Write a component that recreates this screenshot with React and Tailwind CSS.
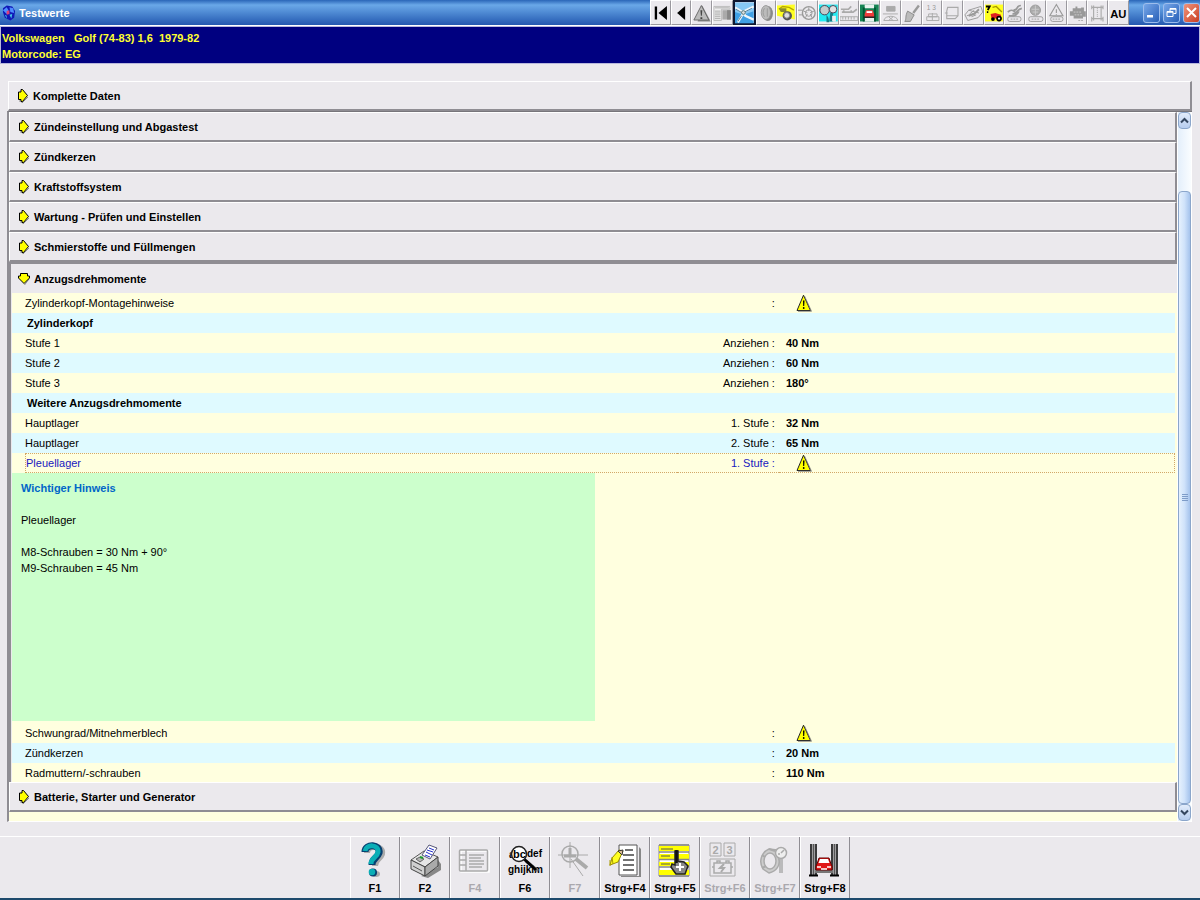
import { useState } from 'react';

const SECTIONS = [
  'Zündeinstellung und Abgastest',
  'Zündkerzen',
  'Kraftstoffsystem',
  'Wartung - Prüfen und Einstellen',
  'Schmierstoffe und Füllmengen',
];

const ROWS = [
  { label: 'Zylinderkopf-Montagehinweise', warn: true },
  { label: 'Zylinderkopf', heading: true },
  { label: 'Stufe 1', step: 'Anziehen', value: '40 Nm' },
  { label: 'Stufe 2', step: 'Anziehen', value: '60 Nm' },
  { label: 'Stufe 3', step: 'Anziehen', value: '180°' },
  { label: 'Weitere Anzugsdrehmomente', heading: true },
  { label: 'Hauptlager', step: '1. Stufe', value: '32 Nm' },
  { label: 'Hauptlager', step: '2. Stufe', value: '65 Nm' },
  { label: 'Pleuellager', step: '1. Stufe', warn: true },
  { hint: true },
  { label: 'Schwungrad/Mitnehmerblech', warn: true },
  { label: 'Zündkerzen', value: '20 Nm' },
  { label: 'Radmuttern/-schrauben', value: '110 Nm' },
];

function ArrowIcon({ open }) {
  return (
    <svg
      className="w-[12px] h-[14px] shrink-0"
      viewBox="0 0 12 14"
      fill="none"
      aria-hidden="true"
    >
      {open ? (
        <>
          <path d="M11 7l-4.500 6" stroke="#8a8a8a" />
          <path
            d="M2.500 1.500h7v2.500h2v2L6 11.500.5 6V4h2z"
            fill="#ffff00"
            stroke="#000"
          />
        </>
      ) : (
        <>
          <path d="M2 12h3v2l6-6" stroke="#8a8a8a" />
          <path
            d="M1.500 3H4V.5h1.500L10.500 6.500 5.500 12.500H4V10.500H1.500z"
            fill="#ffff00"
            stroke="#000"
          />
        </>
      )}
    </svg>
  );
}

function WarnIcon() {
  return (
    <svg
      className="block w-[16px] h-[18px]"
      viewBox="0 0 16 18"
      role="img"
      aria-label="Hinweis"
    >
      <path
        d="M7.500 1.200L14.500 16.500H1z"
        fill="#ffff00"
        stroke="#222"
      />
      <path d="M8.500 2l7 15.300H2" fill="none" stroke="#777" strokeWidth=".8" />
      <path d="M7 6.500h1.500L8.200 12H7.200z" />
      <circle cx="7.700" cy="14" r=".9" />
    </svg>
  );
}

const TOOLS = [
  {
    name: 'Erster',
    art: <path d="M4 4h2.500v14H4zM17 3.500v15L8 11z" />,
  },
  { name: 'Zurück', art: <path d="M14 3.500v15L5.500 11z" /> },
  {
    name: 'Hinweise',
    art: (
      <g>
        <path d="M11 3l9 17H6" fill="#888" />
        <path d="M10 3l8 15.500H2z" fill="#bbb" stroke="#666" />
        <path d="M9 8h2l-.5 6h-1zM9 15.500h2v1.800H9z" fill="#444" />
      </g>
    ),
  },
  {
    name: 'Fahrzeugdaten',
    art: (
      <g>
        <path d="M1 4h17v3H9v12H1z" fill="#eee" stroke="#bbb" />
        <path d="M2 5.500h15M2 9h6M2 11h6M2 13h6M2 15h6M2 17h6" stroke="#aaa" />
        <path d="M10 8h9v10h-9z" fill="#aaa" />
        <path d="M15 8h4v10h-4z" fill="#888" />
      </g>
    ),
  },
  {
    name: 'Testwerte',
    active: true,
    art: (
      <g>
        <path d="M0 0h20v22H0z" fill="#3f9fe4" />
        <path d="M0 0h20v9L9 13l-9-3z" fill="#86c8f4" />
        <path d="M0 5l8 5 12-6M9 11l-6 10M8 10l3 4 9 4" fill="none" stroke="#eef6fa" strokeWidth="2.500" />
        <path d="M1 7l7 4 10-5M7 14l-4 6" fill="none" stroke="#557c96" />
        <circle cx="9" cy="10.500" r="2" fill="#ddd" stroke="#577" />
      </g>
    ),
  },
  {
    name: 'Riementrieb',
    art: (
      <g>
        <ellipse cx="11.500" cy="11.500" rx="5.500" ry="8" fill="#888" />
        <ellipse cx="9.500" cy="10.500" rx="5" ry="7.500" fill="#bbb" stroke="#999" />
        <path d="M8 6c-2 2-2 7 0 9M11 6v9" fill="none" stroke="#999" />
      </g>
    ),
  },
  {
    name: 'Radgeometrie',
    art: (
      <g>
        <path d="M0 3l19-1v16L0 14z" fill="#ffff22" />
        <path d="M2 7l4-3 7 1 5 3" fill="none" stroke="#b8a800" strokeWidth="1.500" />
        <path d="M2 6h8v4H4z" fill="#8a8a30" />
        <circle cx="11" cy="14" r="5" fill="#555" />
        <circle cx="10.500" cy="13.500" r="3" fill="#ddd" stroke="#888" />
      </g>
    ),
  },
  {
    name: 'Räder',
    art: (
      <g fill="none" stroke="#999">
        <circle cx="11.500" cy="11" r="6.800" strokeWidth="1.500" />
        <circle cx="11.500" cy="11" r="3.500" />
        <path d="M11.500 5v4M6 9l4 1.500M8 16l2-4M15 16l-2-4M17 9l-4 1.500M0 8h5M1 13h4" />
      </g>
    ),
  },
  {
    name: 'Zahnriemen',
    art: (
      <g>
        <path d="M0 2h20v18H0z" fill="#23eaf0" />
        <circle cx="6" cy="8" r="5" fill="#c6cccc" stroke="#445" />
        <circle cx="15" cy="7" r="4" fill="#e2e2e2" stroke="#445" />
        <path d="M8 13l2 3 1 5H8zM12 11h3v9h-4" fill="#167d86" />
        <path d="M14 14h4v6h-4z" fill="#eee" />
      </g>
    ),
  },
  {
    name: 'Hebepunkte',
    art: (
      <g fill="none" stroke="#aaa">
        <path d="M1 7h8l3-3M2 10h12l4-3M4 8v3M12 8v3" strokeWidth="1.800" />
        <path d="M0 15h19v4H0zM3 15v3M6 15v3M9 15v3M12 15v3M15 15v3" />
      </g>
    ),
  },
  {
    name: 'Hebebühne',
    art: (
      <g>
        <path d="M0 2h20v18H0z" fill="#168454" />
        <path d="M5 2h10v4H5zM5 16h10v4H5z" fill="#e8f2ee" />
        <path d="M4 5v15M16 5v15" stroke="#053" strokeWidth="2" />
        <path d="M5 12l1.500-4h7L15 12v4H5z" fill="#f03a3a" />
        <path d="M7 9h6v2H7z" fill="#fff" />
        <path d="M4 15.500h12" stroke="#222" strokeWidth="1.500" />
      </g>
    ),
  },
  {
    name: 'Reifendruck',
    art: (
      <g fill="none" stroke="#aaa">
        <path d="M6 4h9v5H6z" fill="#aaa" />
        <path d="M2 12h16" />
        <path d="M3 19c1-6 14-6 15 0zM8 15l5 4M13 15l-5 4" />
      </g>
    ),
  },
  {
    name: 'Service',
    art: (
      <g>
        <path d="M18 3l-6 8" stroke="#999" strokeWidth="2.500" />
        <path d="M6 9l7 4-4 7H3c2-3 0-5 3-11z" fill="#bbb" stroke="#888" />
      </g>
    ),
  },
  {
    name: 'Zündfolge',
    art: (
      <g fill="none" stroke="#aaa">
        <text x="4" y="8" fontSize="7" fill="#999" stroke="none">1 3</text>
        <path d="M6 12h9v3H6zM4 15h13v4H4zM10 11v8" />
      </g>
    ),
  },
  {
    name: 'Scheinwerfer',
    art: (
      <g fill="none" stroke="#aaa">
        <path d="M5 5h11v9l-3 3H4v-8zM2 11h3M4 14h12" strokeWidth="1.200" />
      </g>
    ),
  },
  {
    name: 'Klimaanlage',
    art: (
      <g fill="none" stroke="#999">
        <path d="M1 13l4-5 13-4 2 6-5 6-11 3zM5 8l11 3M3 14l11-4M6 12l5-4M8 15l5-2" />
        <path d="M5 14l6-2 5-5" strokeWidth="2" />
      </g>
    ),
  },
  {
    name: 'Fehlersuche',
    art: (
      <g>
        <path d="M0 2h20v18H0z" fill="#ffff22" />
        <path d="M1 4h4l-2 4M2 10h1.500" fill="none" stroke="#000" strokeWidth="2" />
        <path d="M8 5l4-1 6 6" fill="none" stroke="#a89800" strokeWidth="1.500" />
        <path d="M6 12l5-1 6 2v4H7z" fill="#e02222" />
        <circle cx="8.500" cy="17.500" r="2" />
        <circle cx="15" cy="17" r="3" />
        <circle cx="15" cy="17" r="1.200" fill="#fff" />
      </g>
    ),
  },
  {
    name: 'Motormanagement',
    art: (
      <g fill="none" stroke="#999">
        <path d="M17 3c-6 0-2 5-8 5M18 6c-6 1-4 6-10 6M3 10c4-4 6-1 8 0M4 14c4 0 8 1 11-5" strokeWidth="1.800" />
        <rect x="3" y="15" width="14" height="5" rx="2" />
        <path d="M6 17.500h8" strokeDasharray="2 1" />
      </g>
    ),
  },
  {
    name: 'ABS',
    art: (
      <g stroke="#999">
        <circle cx="10" cy="8" r="5.500" fill="#aaa" />
        <path d="M6 7h8M7 10h6M10 3v10" stroke="#ccc" />
        <rect x="3" y="15" width="15" height="5" rx="2" fill="none" />
        <path d="M6 17.500h9" strokeDasharray="2 1" />
      </g>
    ),
  },
  {
    name: 'Airbag',
    art: (
      <g fill="none" stroke="#999">
        <path d="M10 2l7 12H3zM10 7v4M10 12v1" strokeWidth="1.200" />
        <rect x="4" y="15" width="13" height="5" rx="2" />
        <path d="M6 17.500h9" strokeDasharray="2 1" />
      </g>
    ),
  },
  {
    name: 'Motor',
    art: (
      <g>
        <path d="M2 9h3V6h3V4h2v2h4V5h3v4h2v6h-3v2H6v-3H2z" fill="#999" />
        <path d="M6 10h9M7 13h8" stroke="#ccc" strokeDasharray="2 1" />
        <path d="M11 19h5" stroke="#aaa" strokeDasharray="2 1" />
      </g>
    ),
  },
  {
    name: 'Kühlsystem',
    art: (
      <g fill="none" stroke="#aaa" strokeWidth="1.200">
        <path d="M6 3v16M14 3v16M4 5h12M4 17h12M4 3v4M16 3v4M4 15v5M16 15v5" />
        <path d="M10 6v10" strokeDasharray="1 1" />
      </g>
    ),
  },
  {
    name: 'Abgasuntersuchung',
    art: (
      <text x="10" y="16" textAnchor="middle" fontSize="12" fontWeight="bold">
        AU
      </text>
    ),
  },
];

const KEYS = [
  {
    label: 'F1',
    art: (
      <g fill="none">
        <path d="M11 11c0-9 17-8 15 1-2 6-7 5-7 12" stroke="#aaa" strokeWidth="6" />
        <ellipse cx="20" cy="32" rx="4" ry="3" fill="#aaa" />
        <path d="M9 10c0-9 16-8 14 1-2 6-7 5-7 12" stroke="#063f70" strokeWidth="7" />
        <path d="M9 9c1-7 14-7 13 1-1 6-7 5-7 12" stroke="#0aaeb6" strokeWidth="5" />
        <circle cx="17" cy="30.500" r="4" fill="#063f70" />
        <circle cx="16" cy="30" r="3.300" fill="#0aaeb6" />
      </g>
    ),
  },
  {
    label: 'F2',
    art: (
      <g strokeLinejoin="round">
        <path d="M15 34l17-9v-7l3 4v6l-13 8z" fill="#888" />
        <path d="M5 18l13-9 14 6-13 10z" fill="#e6e6e6" stroke="#555" />
        <path d="M5 18v9l14 7v-9z" fill="#d0d0d0" stroke="#444" />
        <path d="M19 25l13-10v9l-13 10z" fill="#aaa" stroke="#444" />
        <path d="M16 13l7-10 8 3-7 11z" fill="#fff" stroke="#557" />
        <path d="M21 8l6 2M20 10l6 3M23 6l5 2M19 13l5 2" stroke="#2330c8" />
        <path d="M10 17l4-2 4 2-4 3z" fill="#b4b4b4" stroke="#666" />
        <path d="M14 15l3 1" stroke="#1c9b30" strokeWidth="2" />
        <path d="M7 24l9 5" stroke="#555" />
      </g>
    ),
  },
  {
    label: 'F4',
    disabled: true,
    art: (
      <g fill="none" stroke="#aaa" strokeWidth="1.500">
        <path d="M5 9h28v21H5z" stroke="#fff" />
        <rect x="3.500" y="8" width="28" height="21" rx="1" />
        <path d="M10 8v21M4 13h6M4 18h6M4 23h6M13 13h15M13 16h12M13 19h15M13 22h15M13 25h13" />
      </g>
    ),
  },
  {
    label: 'F6',
    art: (
      <g>
        <text x="3" y="16" fontSize="10">a</text>
        <text x="21" y="15" fontSize="10">def</text>
        <text x="2" y="31" fontSize="10">ghijklm</text>
        <path d="M20 19l12 10" stroke="#777" strokeWidth="3" />
        <path d="M18 17l12 11" stroke="#000" strokeWidth="3" />
        <circle cx="13" cy="12" r="7.500" fill="#fff" stroke="#222" strokeWidth="1.500" />
        <text x="7" y="16" fontSize="11" fontWeight="bold">bc</text>
      </g>
    ),
  },
  {
    label: 'F7',
    disabled: true,
    art: (
      <g fill="none" stroke="#aaa">
        <path d="M14 0v26M2 13h30M15 17l12 17" />
        <circle cx="14" cy="12" r="8" strokeWidth="1.500" />
        <path d="M14 6v7M8 14h12" strokeWidth="3" />
        <path d="M20 17l11 9" strokeWidth="4" />
      </g>
    ),
  },
  {
    label: 'Strg+F4',
    art: (
      <g>
        <path d="M15 34h18V5l2 2v28H15z" fill="#888" />
        <path d="M13 3h18v30H13z" fill="#fff" stroke="#555" />
        <path d="M19 8h8M17 13h11M17 18h11M17 23h11M17 28h11" stroke="#444" strokeWidth="1.500" />
        <path d="M13 8l4 1-5 11-8 3 2-7z" fill="#ffff22" stroke="#998c00" />
        <path d="M12 9l5-1-1 5z" fill="#dbbd92" stroke="#333" />
        <path d="M4 18v6M6 15l1 7" stroke="#aa9b00" />
      </g>
    ),
  },
  {
    label: 'Strg+F5',
    art: (
      <g>
        <path d="M3 3h30v31H3z" fill="#fff" stroke="#888" />
        <path d="M3 4h30v5H3zM3 12h30v5H3zM3 20h30v4H3zM3 28h30v5H3z" fill="#ffff00" />
        <path d="M3 3h30M3 10h30M3 17.500h30M3 25h30M3 34h30" stroke="#888" strokeWidth="1.500" />
        <path d="M5 7h12M5 14h9M5 22h9" stroke="#555" />
        <path d="M19 9h3v10l6 1 4 4-3 8H20l-5-7 1-3 3 1z" fill="#888" stroke="#222" strokeWidth="1.500" />
        <path d="M20.500 8v13" stroke="#111" strokeWidth="2.500" />
        <path d="M24 21v8M20 25h8" stroke="#fff" strokeWidth="2" />
      </g>
    ),
  },
  {
    label: 'Strg+F6',
    disabled: true,
    art: (
      <g fill="none" stroke="#aaa">
        <path d="M4 1h11v13H4zM18 1h11v13H18zM4 17h25v17H4z" />
        <text x="6.500" y="11.500" fontSize="11" fill="#aaa" stroke="none">2</text>
        <text x="20.500" y="11.500" fontSize="11" fill="#aaa" stroke="none">3</text>
        <path d="M8 21h17v10H8zM11 21v-2h3v2M20 21v-2h3v2M6 25h2M25 25h2" strokeWidth="1.500" />
        <path d="M18 22l-4 4h4l-3 4" strokeWidth="2" />
      </g>
    ),
  },
  {
    label: 'Strg+F7',
    disabled: true,
    art: (
      <g fill="none" stroke="#aaa" strokeWidth="1.500">
        <path d="M13 7c-7 3-11 12-6 20l6 4c8-2 11-8 10-13L21 8z" fill="#ccc" />
        <ellipse cx="14" cy="19" rx="6" ry="8" fill="#ebe9ed" />
        <path d="M13 7l6 2M6 13l3 2M6 26l4-2" strokeWidth="2" />
        <circle cx="25" cy="11" r="5.500" fill="#eee" />
        <path d="M25 11l3-3M22 12h2M24 17v14M26 17v14" />
      </g>
    ),
  },
  {
    label: 'Strg+F8',
    art: (
      <g>
        <path d="M7.500 2v31M28.500 2v31" stroke="#555" strokeWidth="2" />
        <path d="M5 2v31M10 2v31M26 2v31M31 2v31" stroke="#000" strokeWidth="1.500" />
        <path d="M3 33.500h9M24 33.500h9" stroke="#000" strokeWidth="2" />
        <path d="M9 29.500h18" stroke="#777" strokeWidth="3" />
        <path d="M11 22l2-6h10l2 6 1 2v4H10v-4z" fill="#e01818" stroke="#600" />
        <path d="M14 17h8l1.500 4h-11z" fill="#fff" />
        <path d="M11 25h4M21 25h4M15 27h6" stroke="#fff" strokeWidth="1.500" />
      </g>
    ),
  },
];

function SectionButton({ label, open, onClick }) {
  return (
    <button
      type="button"
      onClick={onClick}
      aria-expanded={open}
      className={`flex w-full items-center gap-1 text-left font-bold bg-[#ebe9ed] ${
        open
          ? 'h-[31px] pl-[7px] border-t-2 border-[#8f8d93]'
          : 'h-[30px] pl-2 border-t border-l border-r-2 border-b-2 border-t-white border-l-white border-r-[#8f8d93] border-b-[#8f8d93]'
      }`}
    >
      <ArrowIcon open={open} />
      {label}
    </button>
  );
}

function DataRow({ row, index, selected, onSelect }) {
  if (row.hint) {
    return (
      <tr className="bg-[#ffffdf]">
        <td colSpan={5} className="p-0 align-top">
          <div className="w-1/2 h-[248px] mb-[2px] px-[9px] py-[7px] bg-[#ccffcc]">
            <h2 className="font-bold text-[#0066c8] mb-4">Wichtiger Hinweis</h2>
            <p className="mb-4">Pleuellager</p>
            <p>M8-Schrauben = 30 Nm + 90°</p>
            <p>M9-Schrauben = 45 Nm</p>
          </div>
        </td>
      </tr>
    );
  }
  const edge = selected ? 'border-y border-dotted border-[#d2a868]' : '';
  return (
    <tr
      onClick={onSelect}
      className={`${index === ROWS.length - 1 ? 'h-[19px]' : 'h-[20px]'} ${
        index % 2 === 0 ? 'bg-[#ffffdf]' : 'bg-[#dffaff]'
      } ${selected ? 'text-[#1818c0]' : ''}`}
    >
      <td className="p-0" />
      {row.heading ? (
        <th colSpan={3} scope="colgroup" className="p-0 pl-[2px] text-left">
          {row.label}
        </th>
      ) : (
        <>
          <th
            scope="row"
            className={`p-0 text-left font-normal ${edge} ${
              selected ? 'border-l' : ''
            }`}
          >
            {row.label}
          </th>
          <td className={`p-0 pr-1 text-right ${edge}`}>
            {row.step ? `${row.step} :` : ':'}
          </td>
          <td
            className={`p-0 pl-[7px] font-bold text-black ${edge} ${
              selected ? 'border-r' : ''
            }`}
          >
            {row.warn ? (
              <span className="block pl-[10px]">
                <WarnIcon />
              </span>
            ) : (
              row.value
            )}
          </td>
        </>
      )}
      <td className="p-0 bg-[#ffffdf]" />
    </tr>
  );
}

function ScrollBar() {
  const arrow =
    'flex items-center justify-center h-[17px] shrink-0 rounded-sm border border-[#8ba6cb] bg-linear-to-b from-[#e2ecfb] to-[#b7cdee]';
  return (
    <div className="flex w-[15px] shrink-0 flex-col border-x border-white bg-linear-to-r from-[#e4effb] to-[#fafdff]">
      <button type="button" aria-label="Nach oben" className={arrow}>
        <svg className="w-[9px] h-[7px]" viewBox="0 0 9 7">
          <path d="M1 5.500L4.500 2 8 5.500" fill="none" stroke="#34465f" strokeWidth="2" />
        </svg>
      </button>
      <div className="h-[62px] shrink-0" />
      <div className="flex flex-1 items-center justify-center rounded-sm border border-[#8ba6cb] bg-linear-to-r from-[#e6f1fd] via-[#cfe2fa] to-[#a5c3ec]">
        <svg className="w-[6px] h-[8px]" viewBox="0 0 6 8">
          <path d="M0 .5h6M0 2.500h6M0 4.500h6M0 6.500h6" stroke="#7e9cc8" />
        </svg>
      </div>
      <button type="button" aria-label="Nach unten" className={arrow}>
        <svg className="w-[9px] h-[7px]" viewBox="0 0 9 7">
          <path d="M1 1.500L4.500 5 8 1.500" fill="none" stroke="#34465f" strokeWidth="2" />
        </svg>
      </button>
    </div>
  );
}

function TitleBar() {
  const win =
    'flex items-center justify-center w-[17px] h-[20px] rounded-[3px] border border-[#9dbdec]';
  return (
    <header className="flex h-[26px] border-b border-white bg-linear-to-b from-[#2a66b8] via-[#6aa8e8] via-20% to-[#2458b0]">
      <div className="flex min-w-0 flex-1 items-center gap-[3px] pl-[2px]">
        <svg className="w-[14px] h-[17px] shrink-0" viewBox="0 0 15 17" aria-hidden="true">
          <path d="M1 4l4-3 6 1 3 5-1 7-4 3-6-3-2-6z" fill="#1018b8" />
          <path d="M1 6l4-3 2 3-2 4zM8 3l4 1 1 5-4-1z" fill="#4d8cff" />
          <path d="M5 7l3-1v4l-3 1z" fill="#e04078" />
          <path d="M8 11l3-1-1 5zM3 11l2 1v3z" fill="#45c4e8" />
        </svg>
        <h1 className="font-bold text-white">Testwerte</h1>
      </div>
      <nav aria-label="Module" className="flex w-[479px] shrink-0">
        {TOOLS.map((tool) => (
          <button
            key={tool.name}
            type="button"
            title={tool.name}
            aria-label={tool.name}
            className={`flex min-w-0 flex-1 basis-0 items-center justify-center bg-[#ebe9ed] ${
              tool.active
                ? 'border-2 border-[#101830]'
                : 'border border-t-white border-l-white border-r-[#9a989e] border-b-[#9a989e]'
            }`}
          >
            <svg className="w-full h-[22px]" viewBox="0 0 20 22">
              {tool.art}
            </svg>
          </button>
        ))}
      </nav>
      <div className="flex items-center gap-[3px] pl-[14px]">
        <button
          type="button"
          aria-label="Minimieren"
          className={`${win} bg-linear-to-br from-[#76a6e8] to-[#2860b8]`}
        >
          <svg className="w-[11px] h-[11px]" viewBox="0 0 11 11">
            <path d="M1 8h6v2.500H1z" fill="#fff" />
          </svg>
        </button>
        <button
          type="button"
          aria-label="Wiederherstellen"
          className={`${win} bg-linear-to-br from-[#76a6e8] to-[#2860b8]`}
        >
          <svg className="w-[11px] h-[11px]" viewBox="0 0 11 11" fill="none" stroke="#fff">
            <path d="M4 4V1.500h6v5H7.500M1 4.500h6v5H1z" />
            <path d="M4 2h6M1 5h6" strokeWidth="1.500" />
          </svg>
        </button>
        <button
          type="button"
          aria-label="Schließen"
          className={`${win} bg-linear-to-br from-[#f0937a] to-[#c83c20]`}
        >
          <svg className="w-[11px] h-[11px]" viewBox="0 0 11 11">
            <path d="M1 1l9 9M10 1l-9 9" stroke="#fff" strokeWidth="2" />
          </svg>
        </button>
      </div>
    </header>
  );
}

export default function App() {
  const [open, setOpen] = useState(true);
  const [picked, setPicked] = useState(8);

  return (
    <div className="flex min-h-screen flex-col bg-[#ebe9ed] font-['Liberation_Sans_Narrow','Arial_Narrow','Liberation_Sans',sans-serif] text-[11px] leading-[16px] text-black">
      <TitleBar />
      <div className="border border-[#b8b8dc] bg-[#000080] pt-[3px] pb-px pl-px font-bold text-[#ffff30]">
        <p className="whitespace-pre">Volkswagen   Golf (74-83) 1,6  1979-82</p>
        <p>Motorcode: EG</p>
      </div>

      <main className="flex flex-1 flex-col pl-[7px] pr-[8px] pt-[17px] pb-[14px]">
        <div className="pl-px">
          <SectionButton label="Komplette Daten" open={false} />
        </div>
        <div className="flex flex-1 border-t border-l-2 border-b border-t-[#77757b] border-l-[#8f8d93] border-b-white bg-[#ffffdf]">
          <div className="flex-1">
            {SECTIONS.map((name) => (
              <SectionButton key={name} label={name} open={false} />
            ))}
            <div className="border-l-2 border-[#8f8d93]">
              <SectionButton
                label="Anzugsdrehmomente"
                open={open}
                onClick={() => setOpen(!open)}
              />
              {open && (
                <table className="w-full table-fixed border-separate border-spacing-0 border-l border-[#ebe9ed]">
                  <colgroup>
                    <col className="w-[13px]" />
                    <col className="w-[56%]" />
                    <col />
                    <col className="w-[34%]" />
                    <col className="w-[2px]" />
                  </colgroup>
                  <tbody>
                    {ROWS.map((row, i) => (
                      <DataRow
                        key={i}
                        row={row}
                        index={i}
                        selected={i === picked && !row.heading}
                        onSelect={() => setPicked(i)}
                      />
                    ))}
                  </tbody>
                </table>
              )}
            </div>
            <SectionButton label="Batterie, Starter und Generator" open={false} />
          </div>
          <ScrollBar />
        </div>
      </main>

      <footer className="flex h-[64px] justify-center border-t border-b-2 border-t-white border-b-[#1d4a6c]">
        {KEYS.map((key) => (
          <button
            key={key.label}
            type="button"
            disabled={key.disabled}
            className={`flex w-[50px] flex-col items-center border-l border-r border-l-white border-r-[#8f8d93] pt-[5px] font-bold ${
              key.disabled ? 'text-[#aaa8ad]' : 'text-black'
            }`}
          >
            <svg className="w-[38px] h-[38px] shrink-0" viewBox="0 0 38 38" aria-hidden="true">
              {key.art}
            </svg>
            <span className="whitespace-nowrap">{key.label}</span>
          </button>
        ))}
      </footer>
    </div>
  );
}
